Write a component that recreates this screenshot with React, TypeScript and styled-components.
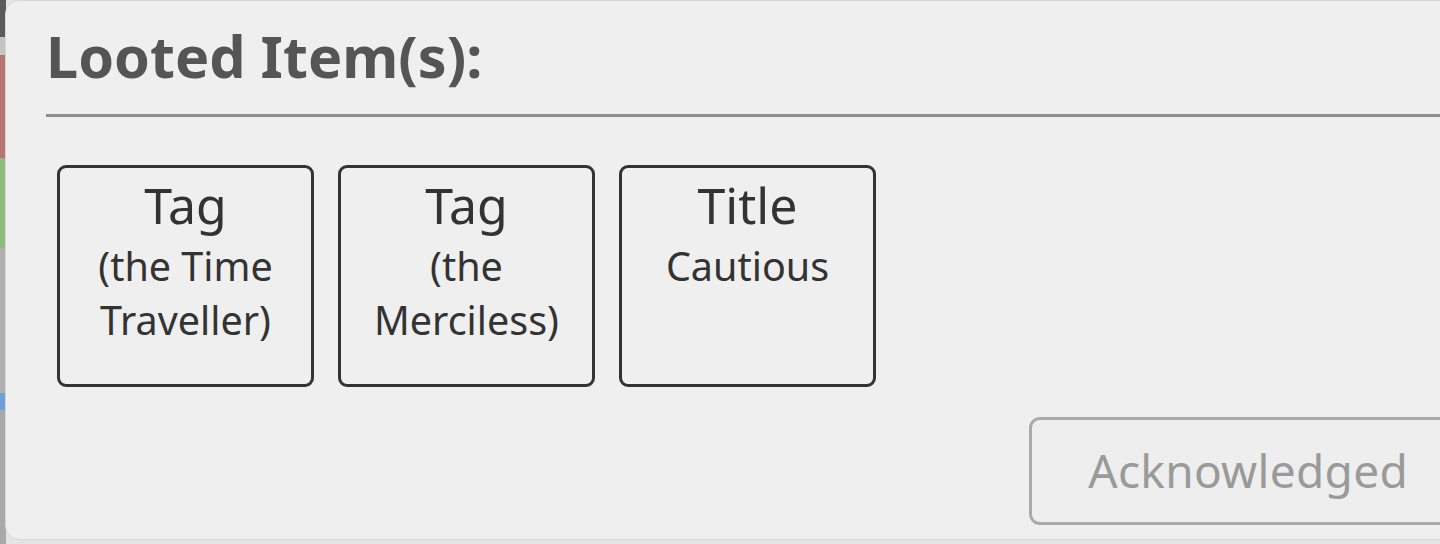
import React from "react";
import styled, { createGlobalStyle } from "styled-components";

const Global = createGlobalStyle`
  html, body { margin: 0; padding: 0; }
  body {
    width: 1440px;
    height: 544px;
    overflow: hidden;
    background: #e4e4e4;
    font-family: "Noto Sans", "Open Sans", sans-serif;
  }
`;

const Stage = styled.div`
  display: flex;
  width: 1440px;
  height: 544px;
  overflow: hidden;
`;

const Backdrop = styled.div`
  flex: 0 0 6px;
  display: flex;
  flex-direction: column;
  background: #a9a9a9;
`;

const Swatch = styled.div<{ $h: number; $c: string }>`
  flex: 0 0 ${(p) => p.$h}px;
  background: ${(p) => p.$c};
`;

const Modal = styled.div`
  flex: 0 0 1475px;
  margin-left: -1px;
  height: 540px;
  box-sizing: border-box;
  background: #efefef;
  border: 1px solid #d6d6d6;
  border-radius: 14px;
  padding: 13px 0 0 40px;
  display: flex;
  flex-direction: column;
`;

const Title = styled.h1`
  margin: 0;
  font-size: 57.5px;
  line-height: 84px;
  font-weight: 700;
  color: #555555;
`;

const Rule = styled.div`
  margin-top: 16px;
  height: 3px;
  background: #8f8f8f;
`;

const Items = styled.div`
  display: flex;
  gap: 24px;
  padding: 48px 0 0 11px;
`;

const Card = styled.div`
  width: 257px;
  height: 222px;
  box-sizing: border-box;
  border: 3px solid #333333;
  border-radius: 9px;
  display: flex;
  flex-direction: column;
  align-items: center;
  text-align: center;
  color: #333333;
  padding-top: 6px;
`;

const CardKind = styled.div`
  font-size: 50px;
  line-height: 62px;
`;

const CardName = styled.div`
  margin-top: 3px;
  font-size: 39.5px;
  line-height: 54px;
  padding: 0 14px;
`;

const Footer = styled.div`
  display: flex;
  justify-content: flex-end;
  padding: 30px 12px 0 0;
`;

const Button = styled.button`
  font-family: inherit;
  font-size: 46px;
  line-height: 66px;
  letter-spacing: 0.3px;
  color: #9a9a9a;
  background: #eeeeee;
  border: 3px solid #aaaaaa;
  border-radius: 11px;
  padding: 17px 56px 19px 56px;
  cursor: pointer;
`;

const items = [
  { kind: "Tag", name: "(the Time Traveller)" },
  { kind: "Tag", name: "(the Merciless)" },
  { kind: "Title", name: "Cautious" },
];

export default function App() {
  return (
    <>
      <Global />
      <Stage>
        <Backdrop>
          <Swatch $h={37} $c="#5a5a5a" />
          <Swatch $h={18} $c="#c4c4c4" />
          <Swatch $h={103} $c="#b87474" />
          <Swatch $h={90} $c="#8cbb7c" />
          <Swatch $h={145} $c="#b0b0b0" />
          <Swatch $h={17} $c="#6e9fd6" />
          <Swatch $h={134} $c="#a9a9a9" />
        </Backdrop>
        <Modal>
          <Title>Looted Item(s):</Title>
          <Rule />
          <Items>
            {items.map((it, i) => (
              <Card key={i}>
                <CardKind>{it.kind}</CardKind>
                <CardName>{it.name}</CardName>
              </Card>
            ))}
          </Items>
          <Footer>
            <Button>Acknowledged</Button>
          </Footer>
        </Modal>
      </Stage>
    </>
  );
}
